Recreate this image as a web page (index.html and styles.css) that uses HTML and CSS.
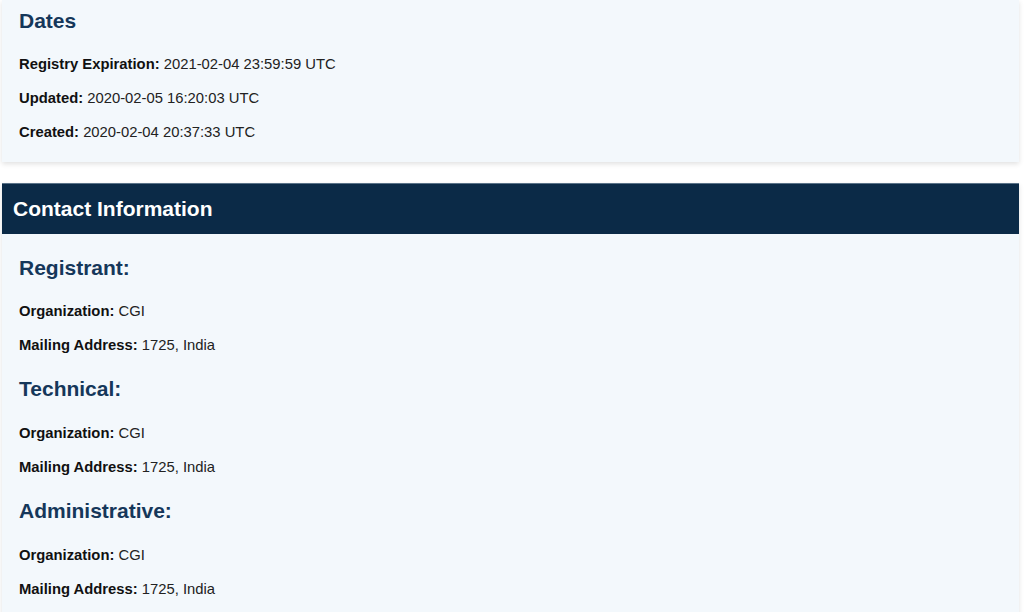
FILE: index.html
```html
<!DOCTYPE html>
<html>
<head>
<meta charset="utf-8">
<link rel="stylesheet" href="styles.css">
</head>
<body>
<div class="page">
  <section class="card dates">
    <h2 class="card-title">Dates</h2>
    <p class="field"><span class="label">Registry Expiration:</span> 2021-02-04 23:59:59 UTC</p>
    <p class="field"><span class="label">Updated:</span> 2020-02-05 16:20:03 UTC</p>
    <p class="field"><span class="label">Created:</span> 2020-02-04 20:37:33 UTC</p>
  </section>
  <section class="card contact">
    <h2 class="card-header">Contact Information</h2>
    <div class="card-body">
      <h3 class="sub-title">Registrant:</h3>
      <p class="field"><span class="label">Organization:</span> CGI</p>
      <p class="field"><span class="label">Mailing Address:</span> 1725, India</p>
      <h3 class="sub-title">Technical:</h3>
      <p class="field"><span class="label">Organization:</span> CGI</p>
      <p class="field"><span class="label">Mailing Address:</span> 1725, India</p>
      <h3 class="sub-title">Administrative:</h3>
      <p class="field"><span class="label">Organization:</span> CGI</p>
      <p class="field"><span class="label">Mailing Address:</span> 1725, India</p>
    </div>
  </section>
</div>
</body>
</html>
```
FILE: styles.css
```css
html, body {
  margin: 0;
  padding: 0;
  background: #ffffff;
  font-family: "Liberation Sans", Arial, sans-serif;
  color: #222222;
  overflow: hidden;
}
.page {
  padding: 0 5px 0 2px;
}
.card {
  background: #f3f8fc;
  box-shadow: 0 2px 5px rgba(0, 0, 0, 0.12);
}
.dates {
  padding: 1px 17px 6px;
  margin-bottom: 21px;
}
.card-title {
  font-size: 21px;
  font-weight: bold;
  color: #15375a;
  margin: 8px 0 21px;
  line-height: 24px;
}
.field {
  font-size: 14.8px;
  line-height: 20px;
  margin: 0 0 14px;
  color: #222222;
}
.label {
  font-weight: bold;
  color: #111111;
}
.card-header {
  background: #0b2a47;
  color: #ffffff;
  font-size: 21px;
  font-weight: bold;
  margin: 0;
  height: 51px;
  line-height: 49px;
  padding: 0 11px;
  border-top: 1px solid #5a7288;
  box-sizing: border-box;
}
.card-body {
  padding: 21px 17px 20px;
}
.sub-title {
  font-size: 21px;
  font-weight: bold;
  color: #15375a;
  margin: 0 0 20px;
  line-height: 26px;
}
.field + .sub-title {
  margin-top: 21px;
  margin-bottom: 21px;
}
```
